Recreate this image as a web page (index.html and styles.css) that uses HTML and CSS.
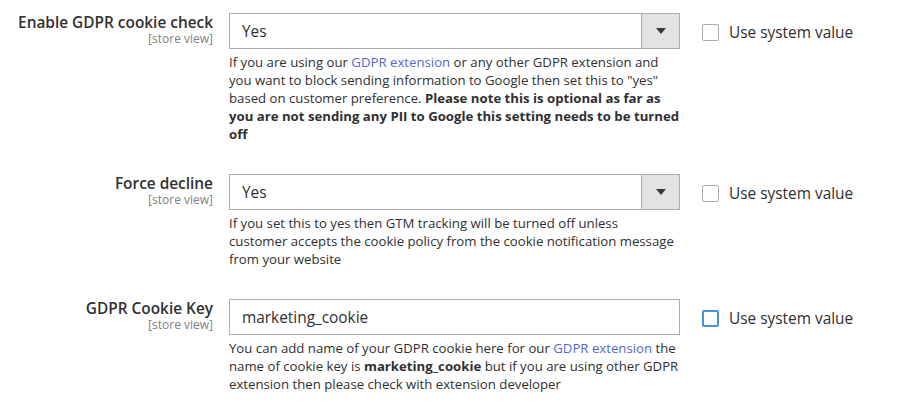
FILE: index.html
```html
<!DOCTYPE html>
<html lang="en">
<head>
<meta charset="utf-8">
<title>GDPR settings</title>
<link rel="stylesheet" href="styles.css">
</head>
<body>
<div class="config">
  <div class="row">
    <div class="label">
      <span class="title">Enable GDPR cookie check</span>
      <span class="scope">[store view]</span>
    </div>
    <div class="control">
      <div class="select">
        <span class="value">Yes</span>
        <span class="arrow"><svg width="10" height="6" viewBox="0 0 10 6"><path d="M0 0H10L5 6Z" fill="#41362f"/></svg></span>
      </div>
      <p class="note">If you are using our <a href="#">GDPR extension</a> or any other GDPR extension and you want to block sending information to Google then set this to "yes" based on customer preference. <strong>Please note this is optional as far as you are not sending any PII to Google this setting needs to be turned off</strong></p>
    </div>
    <label class="system"><span class="box"></span><span>Use system value</span></label>
  </div>

  <div class="row">
    <div class="label">
      <span class="title">Force decline</span>
      <span class="scope">[store view]</span>
    </div>
    <div class="control">
      <div class="select">
        <span class="value">Yes</span>
        <span class="arrow"><svg width="10" height="6" viewBox="0 0 10 6"><path d="M0 0H10L5 6Z" fill="#41362f"/></svg></span>
      </div>
      <p class="note note-tight">If you set this to yes then GTM tracking will be turned off unless customer accepts the cookie policy from the cookie notification message from your website</p>
    </div>
    <label class="system"><span class="box"></span><span>Use system value</span></label>
  </div>

  <div class="row">
    <div class="label">
      <span class="title">GDPR Cookie Key</span>
      <span class="scope">[store view]</span>
    </div>
    <div class="control">
      <div class="input"><span class="value">marketing_cookie</span></div>
      <p class="note">You can add name of your GDPR cookie here for our <a href="#">GDPR extension</a> the name of cookie key is <strong>marketing_cookie</strong> but if you are using other GDPR extension then please check with extension developer</p>
    </div>
    <label class="system"><span class="box focus"></span><span>Use system value</span></label>
  </div>
</div>
</body>
</html>
```

FILE: styles.css
```css
html, body {
  margin: 0;
  padding: 0;
  background: #fff;
}
body {
  font-family: "Open Sans", "DejaVu Sans", sans-serif;
  color: #303030;
}
.config {
  padding-top: 13px;
}
.row {
  display: grid;
  grid-template-columns: 213px 451px auto;
  column-gap: 16px;
  margin-bottom: 31px;
}
.label {
  display: flex;
  flex-direction: column;
  align-items: flex-end;
  text-align: right;
  padding-top: 1px;
}
.title {
  font-size: 15.4px;
  font-weight: 600;
  line-height: 18px;
  white-space: nowrap;
}
.scope {
  font-size: 12px;
  line-height: 14px;
  color: #808080;
}
.select, .input {
  box-sizing: border-box;
  height: 36px;
  border: 1px solid #adadad;
  display: flex;
  align-items: center;
  background: #fff;
}
.value {
  flex: 1;
  padding-left: 12px;
  font-size: 15.4px;
}
.arrow {
  width: 37px;
  align-self: stretch;
  background: #e3e3e3;
  border-left: 1px solid #adadad;
  display: flex;
  align-items: center;
  justify-content: center;
}
.note {
  margin: 4px 0 0;
  font-size: 13.2px;
  line-height: 18px;
}
.note-tight {
  padding-right: 4px;
}
.note a {
  color: #5468d4;
  text-decoration: none;
}
.note strong {
  font-weight: 700;
}
.system {
  display: flex;
  align-items: center;
  gap: 10px;
  height: 17px;
  margin-top: 11px;
  margin-left: 6px;
  font-size: 15.4px;
  line-height: 17px;
  white-space: nowrap;
}
.box {
  flex: none;
  box-sizing: border-box;
  width: 17px;
  height: 17px;
  border: 1px solid #adadad;
  border-radius: 2px;
  background: #fff;
}
.box.focus {
  border: 2px solid #4a8ee0;
}
```
